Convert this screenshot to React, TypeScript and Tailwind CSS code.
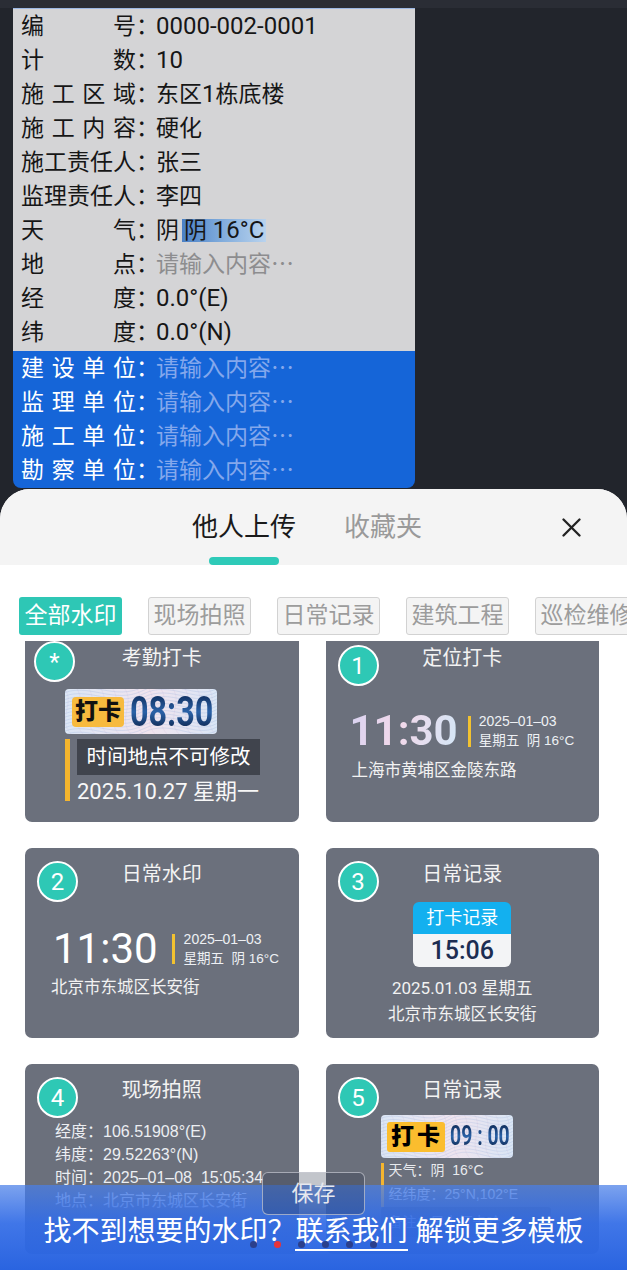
import React from "react";

function Mixed({ text }: { text: string }) {
  const parts = text.split(/([0-9A-Za-z.°()\-]+)/);
  return (
    <>
      {parts.map((p, i) =>
        /[0-9A-Za-z]/.test(p) ? (
          <span key={i} className="text-[24px]">
            {p}
          </span>
        ) : (
          <span key={i}>{p}</span>
        )
      )}
    </>
  );
}

function Label({ chars }: { chars: string[] }) {
  return (
    <>
      <div className="flex w-[115px] justify-between">
        {chars.map((c, i) => (
          <span key={i}>{c}</span>
        ))}
      </div>
      <span className="w-[20px]">：</span>
    </>
  );
}

const grayRows: { label: string[]; value: React.ReactNode }[] = [
  { label: ["编", "号"], value: <Mixed text="0000-002-0001" /> },
  { label: ["计", "数"], value: <Mixed text="10" /> },
  { label: ["施", "工", "区", "域"], value: <Mixed text="东区1栋底楼" /> },
  { label: ["施", "工", "内", "容"], value: "硬化" },
  { label: ["施", "工", "责", "任", "人"], value: "张三" },
  { label: ["监", "理", "责", "任", "人"], value: "李四" },
  {
    label: ["天", "气"],
    value: (
      <>
        <span>阴</span>
        <span className="ml-[3px] flex h-[23px] items-center bg-[linear-gradient(90deg,#4a80c6,#7eaadb_45%,#b9d3ee)] px-[2px]">
          阴&nbsp;<span className="text-[24px]">16°C</span>
        </span>
      </>
    ),
  },
  { label: ["地", "点"], value: <span className="text-[#8d8d8f]">请输入内容⋯</span> },
  { label: ["经", "度"], value: <Mixed text="0.0°(E)" /> },
  { label: ["纬", "度"], value: <Mixed text="0.0°(N)" /> },
];

const blueRows = [
  ["建", "设", "单", "位"],
  ["监", "理", "单", "位"],
  ["施", "工", "单", "位"],
  ["勘", "察", "单", "位"],
];

function Circle({ children, className }: { children: React.ReactNode; className: string }) {
  return (
    <div
      className={`absolute flex h-[41px] w-[41px] items-center justify-center rounded-full border-2 border-white bg-[#2ec8b5] text-[24px] leading-none text-white ${className}`}
    >
      {children}
    </div>
  );
}

function Card({
  num,
  title,
  children,
  circleClass = "left-[12px] top-[13px]",
}: {
  num: React.ReactNode;
  title: string;
  children: React.ReactNode;
  circleClass?: string;
}) {
  return (
    <div className="relative h-[190px] overflow-hidden rounded-[7px] bg-[#6b707c]">
      <Circle className={circleClass}>{num}</Circle>
      <div className="pt-[14px] text-center text-[20px] leading-[24px] text-[#f3f3f3]">{title}</div>
      {children}
    </div>
  );
}

function Guilloche() {
  const lines = Array.from({ length: 14 });
  return (
    <svg className="absolute inset-0 h-full w-full" viewBox="0 0 152 45" preserveAspectRatio="none">
      {lines.map((_, i) => (
        <path
          key={i}
          d={`M0 ${i * 3.5} C 25 ${i * 3.5 - 9}, 50 ${i * 3.5 + 12}, 78 ${i * 3.5 - 2} S 130 ${i * 3.5 + 8}, 152 ${i * 3.5 - 4}`}
          fill="none"
          stroke="#93aedb"
          strokeWidth="0.35"
          opacity="0.75"
        />
      ))}
      {lines.map((_, i) => (
        <path
          key={"b" + i}
          d={`M${i * 12} 0 C ${i * 12 + 10} 15, ${i * 12 - 8} 30, ${i * 12 + 6} 45`}
          fill="none"
          stroke="#c9a9cf"
          strokeWidth="0.3"
          opacity="0.5"
        />
      ))}
    </svg>
  );
}

export default function App() {
  return (
    <div className="relative h-[1270px] w-[627px] overflow-hidden bg-[#22252c] font-['Roboto','Noto_Sans_CJK_SC',sans-serif]">
      <div className="h-[8px] bg-[#2a2d35]" />

      {/* info panel */}
      <div className="ml-[13px] w-[402px]">
        <div className="border-t border-[#9cb8e4] bg-[#d4d4d6] pb-[2px] pl-[8px] text-[23px] text-[#161616]">
          {grayRows.map((r, i) => (
            <div key={i} className="flex h-[34px] items-center leading-none">
              <Label chars={r.label} />
              <div className="flex items-center">{r.value}</div>
            </div>
          ))}
        </div>
        <div className="rounded-b-[8px] bg-[#1565d8] pb-[1px] pl-[8px] text-[23px] text-white">
          {blueRows.map((l, i) => (
            <div key={i} className="flex h-[34px] items-center leading-none">
              <Label chars={l} />
              <span className="text-[#84a8ec]">请输入内容⋯</span>
            </div>
          ))}
        </div>
      </div>

      {/* bottom sheet */}
      <div className="mt-[1px] h-[781px] overflow-hidden rounded-t-[30px] bg-white">
        <div className="flex h-[76px] bg-[#f4f4f4] pt-[24px]">
          <div className="ml-[192px] flex flex-col items-center">
            <div className="text-[26px] leading-[28px] text-[#1a1a1a]">他人上传</div>
            <div className="mt-[16px] h-[8px] w-[70px] rounded-full bg-[#2ecab8]" />
          </div>
          <div className="ml-[48px] text-[26px] leading-[28px] text-[#9a9a9a]">收藏夹</div>
          <div className="ml-auto mr-[46px] flex h-[28px] items-center">
            <svg width="19" height="19" viewBox="0 0 19 19">
              <path d="M1.5 1.5L17.5 17.5M17.5 1.5L1.5 17.5" stroke="#222" strokeWidth="2.3" strokeLinecap="round" />
            </svg>
          </div>
        </div>

        {/* chips */}
        <div className="mt-[32px] flex h-[38px] gap-[26px] overflow-hidden pl-[19px]">
          <div className="flex h-[38px] w-[103px] shrink-0 items-center justify-center rounded-[3px] bg-[#2ec7b5] text-[23px] text-white">
            全部水印
          </div>
          {["现场拍照", "日常记录", "建筑工程", "巡检维修"].map((c) => (
            <div
              key={c}
              className="flex h-[38px] w-[103px] shrink-0 items-center justify-center rounded-[3px] border border-[#d2d2d2] bg-[#f4f4f4] text-[23px] text-[#9c9c9c]"
            >
              {c}
            </div>
          ))}
        </div>

        {/* cards */}
        <div className="mt-[6px] h-[629px] overflow-hidden">
          <div className="-mt-[9px] grid grid-cols-2 gap-x-[27px] gap-y-[26px] pl-[25px] pr-[28px]">
            {/* 考勤打卡 */}
            <Card num="*" title="考勤打卡" circleClass="left-[9px] top-[9px]">
              <div className="relative ml-[40px] mt-[19px] flex h-[45px] w-[152px] items-center overflow-hidden rounded-[4px] bg-[linear-gradient(90deg,#dbe6f5,#f1e4ee_55%,#dae6f5)] pl-[7px]">
                <Guilloche />
                <div className="relative flex h-[30px] w-[52px] shrink-0 items-center justify-center rounded-[4px] bg-[#f7ba3e] text-[23px] font-black leading-none text-[#111]">
                  打卡
                </div>
                <div className="relative ml-[6px] shrink-0 origin-left scale-x-[0.77] bg-[linear-gradient(180deg,#0b2550,#2a62a8_50%,#081a3c)] bg-clip-text text-[42px] font-bold leading-none text-transparent">
                  08:30
                </div>
              </div>
              <div className="ml-[40px] mt-[5px] flex">
                <div className="h-[62px] w-[5px] bg-[#f5b52e]" />
                <div className="ml-[7px]">
                  <div className="flex h-[36px] w-[183px] items-center justify-center bg-[#40444d] text-[20.5px] leading-none text-white">
                    时间地点不可修改
                  </div>
                  <div className="mt-[6px] text-[22px] leading-[22px] text-[#f7f7f7]">2025.10.27 星期一</div>
                </div>
              </div>
            </Card>

            {/* 定位打卡 */}
            <Card num="1" title="定位打卡">
              <div className="ml-[24px] mt-[39px] flex items-center">
                <div className="bg-[linear-gradient(100deg,#d9d3f1,#f2d8ea_45%,#d3e6f6)] bg-clip-text text-[42px] font-bold leading-[44px] text-transparent">
                  11:30
                </div>
                <div className="ml-[10px] h-[31px] w-[3px] bg-[#f2c230]" />
                <div className="ml-[8px] font-['Liberation_Sans','Noto_Sans_CJK_SC',sans-serif] text-[14px] leading-[20px] text-[#eef0f4]">
                  <div>2025–01–03</div>
                  <div className="text-[13.5px]">星期五&nbsp;&nbsp;阴 16°C</div>
                </div>
              </div>
              <div className="ml-[26px] mt-[7px] text-[16.5px] leading-[22px] text-[#f2f2f2]">上海市黄埔区金陵东路</div>
            </Card>

            {/* 日常水印 */}
            <Card num="2" title="日常水印">
              <div className="ml-[28px] mt-[41px] flex items-center">
                <div className="text-[42px] leading-[44px] text-white">11:30</div>
                <div className="ml-[14px] h-[30px] w-[3px] bg-[#f2c230]" />
                <div className="ml-[9px] font-['Liberation_Sans','Noto_Sans_CJK_SC',sans-serif] text-[14px] leading-[20px] text-[#eef0f4]">
                  <div>2025–01–03</div>
                  <div className="text-[13.5px]">星期五&nbsp;&nbsp;阴 16°C</div>
                </div>
              </div>
              <div className="ml-[26px] mt-[6px] text-[16.5px] leading-[22px] text-[#f2f2f2]">北京市东城区长安街</div>
            </Card>

            {/* 日常记录 clock */}
            <Card num="3" title="日常记录">
              <div className="mx-auto mt-[16px] w-[98px] overflow-hidden rounded-[6px]">
                <div className="flex h-[32px] items-center justify-center bg-[#13b0ef] text-[18px] leading-none text-white">
                  打卡记录
                </div>
                <div className="flex h-[33px] items-center justify-center bg-[#f3f4f6] text-[25px] font-medium leading-none text-[#1c2d52]">
                  15:06
                </div>
              </div>
              <div className="mt-[9px] text-center text-[17px] leading-[24px] text-[#f2f2f2]">2025.01.03 星期五</div>
              <div className="mt-[3px] text-center text-[16.5px] leading-[24px] text-[#f2f2f2]">北京市东城区长安街</div>
            </Card>

            {/* 现场拍照 */}
            <Card num="4" title="现场拍照">
              <div className="ml-[30px] mt-[18px] font-['Liberation_Sans','Noto_Sans_CJK_SC',sans-serif] text-[16px] leading-[23px] text-[#eceef2]">
                <div>经度：106.51908°(E)</div>
                <div>纬度：29.52263°(N)</div>
                <div>时间：2025–01–08&nbsp;&nbsp;15:05:34</div>
                <div>地点：北京市东城区长安街</div>
              </div>
            </Card>

            {/* 日常记录 badge */}
            <Card num="5" title="日常记录">
              <div className="relative ml-[55px] mt-[13px] flex h-[43px] w-[132px] items-center overflow-hidden rounded-[4px] bg-[linear-gradient(90deg,#dbe6f5,#efe4ef_55%,#dae6f5)] pl-[6px]">
                <Guilloche />
                <div className="relative flex h-[30px] w-[58px] shrink-0 items-center justify-center rounded-[3px] bg-[#fbbd2e] pl-[3px] text-[23px] font-black leading-none tracking-[3px] text-black">
                  打卡
                </div>
                <div className="relative ml-[5px] shrink-0 origin-left scale-x-[0.72] whitespace-pre bg-[linear-gradient(180deg,#0b2550,#2a62a8_50%,#081a3c)] bg-clip-text text-[27px] font-bold leading-none text-transparent">
                  09 : 00
                </div>
              </div>
              <div className="ml-[55px] flex">
                <div className="mt-[5px] h-[44px] w-[3px] bg-[#f5b52e]" />
                <div className="ml-[5px] font-['Liberation_Sans','Noto_Sans_CJK_SC',sans-serif] text-[14px] leading-[24px] text-[#e8eaee]">
                  <div>天气：阴&nbsp;&nbsp;16°C</div>
                  <div>经纬度：25°N,102°E</div>
                </div>
              </div>
              <div className="ml-[55px] flex h-[30px] w-[170px] items-center rounded-[3px] bg-[#50555f] pl-[8px] text-[14px] text-[#d8dbe0]">
                备注：早上打卡哈
              </div>
            </Card>
          </div>
        </div>
      </div>

      {/* save button */}
      <div className="absolute left-[262px] top-[1172px] z-10 flex h-[43px] w-[103px] items-center justify-center rounded-[6px] border border-[#c9ccd4]/70 bg-[rgba(35,45,70,0.28)] text-[22px] leading-none text-[#e6e8ee]">
        保存
      </div>

      {/* bottom banner */}
      <div className="absolute bottom-0 left-0 h-[85px] w-full bg-[linear-gradient(180deg,rgba(74,127,232,0.72)_0%,rgba(50,108,230,0.93)_45%,#2a64e0_100%)]">
        <div className="mt-[33px] flex items-start justify-center text-[28px] leading-[28px] text-white">
          <span>找不到想要的水印？</span>
          <span className="border-b-2 border-white pb-[3px]">联系我们</span>
          <span className="ml-[8px]">解锁更多模板</span>
        </div>
      </div>

      {/* dots */}
      <div className="absolute left-[250px] top-[1241px] z-20 flex gap-[17px]">
        <div className="h-[7px] w-[7px] rounded-full bg-[#2b3f8c]" />
        <div className="h-[7px] w-[7px] rounded-full bg-[#e8333a]" />
        <div className="h-[7px] w-[7px] rounded-full bg-[#2b3f8c]" />
        <div className="h-[7px] w-[7px] rounded-full bg-[#2b3f8c]" />
        <div className="h-[7px] w-[7px] rounded-full bg-[#2b3f8c]" />
        <div className="h-[7px] w-[7px] rounded-full bg-[#2b3f8c]" />
      </div>
    </div>
  );
}
